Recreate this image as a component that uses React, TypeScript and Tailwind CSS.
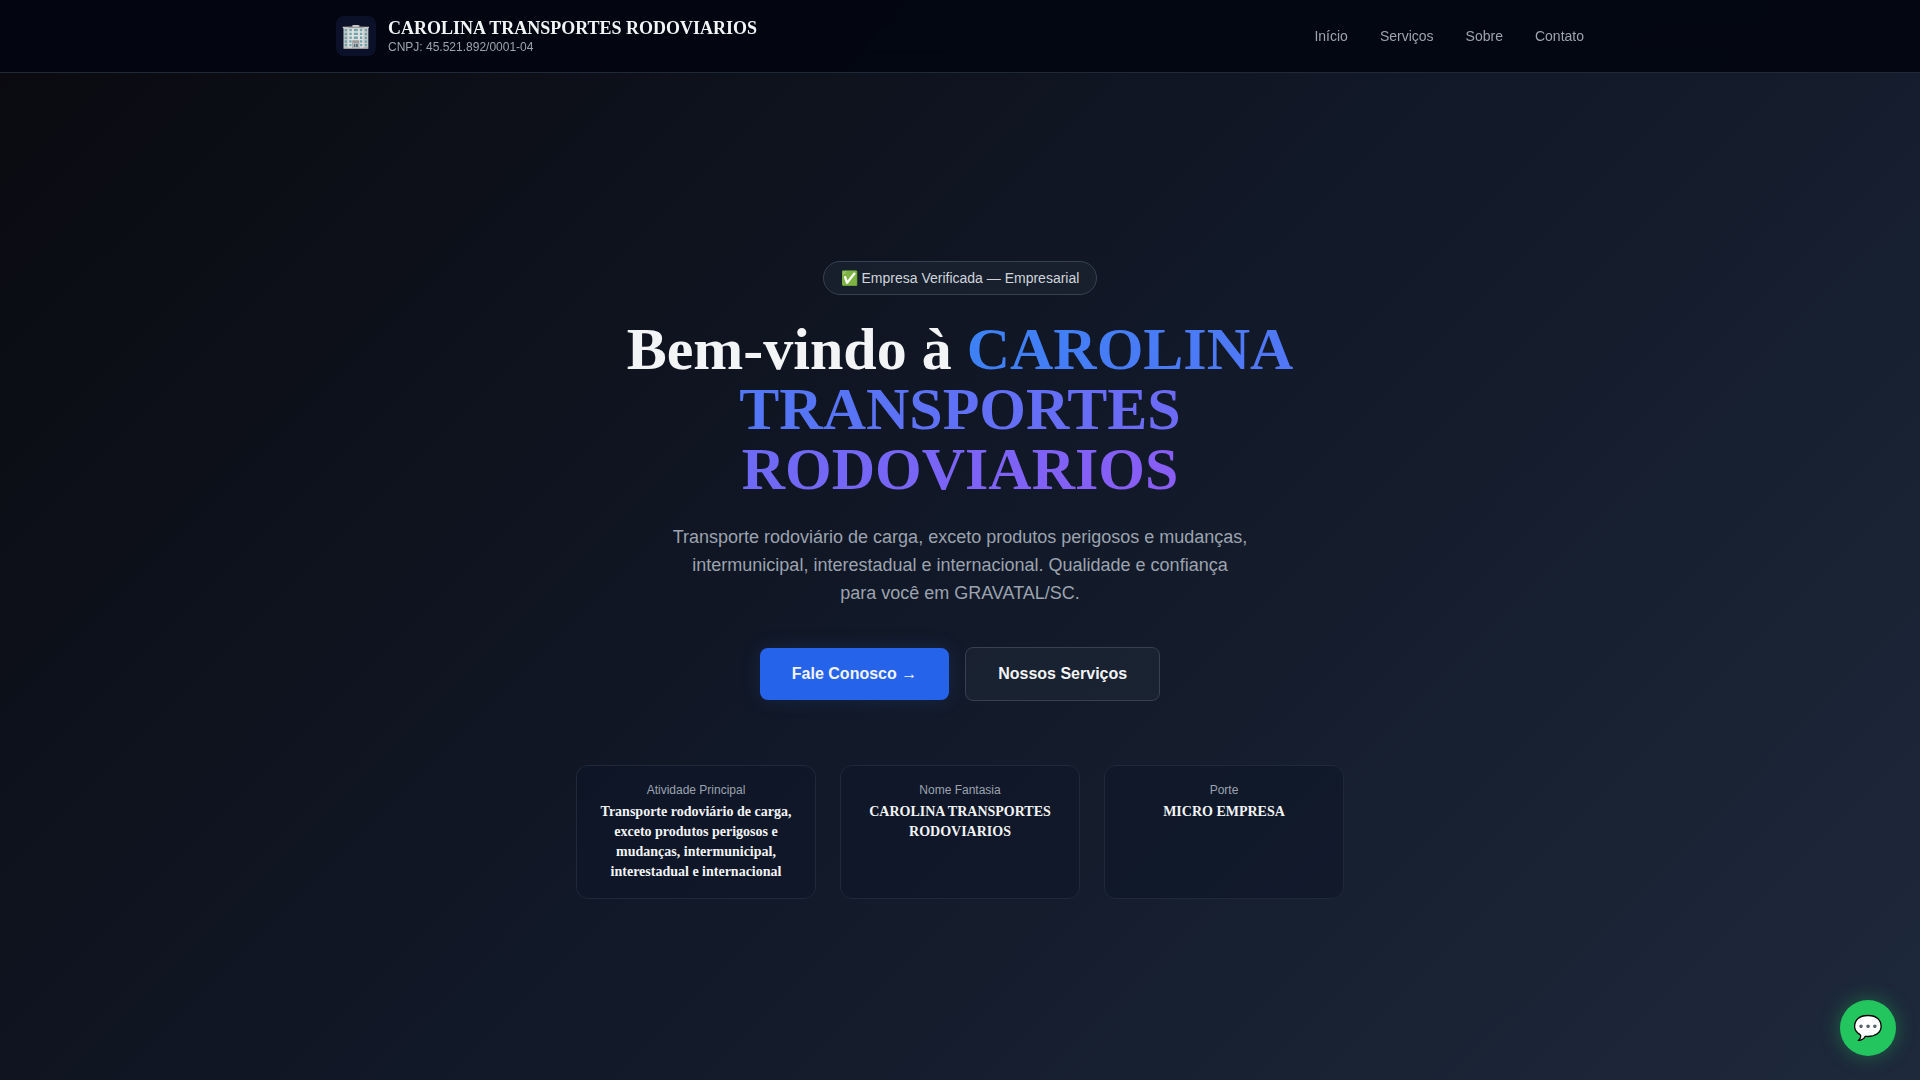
const links = [
  { label: "Início", href: "#inicio" },
  { label: "Serviços", href: "#servicos" },
  { label: "Sobre", href: "#sobre" },
  { label: "Contato", href: "#contato" },
];

const facts = [
  {
    label: "Atividade Principal",
    value:
      "Transporte rodoviário de carga, exceto produtos perigosos e mudanças, intermunicipal, interestadual e internacional",
  },
  { label: "Nome Fantasia", value: "CAROLINA TRANSPORTES RODOVIARIOS" },
  { label: "Porte", value: "MICRO EMPRESA" },
];

function Header() {
  return (
    <header className="fixed inset-x-0 top-0 z-10 border-b border-[#1f2937] bg-[#030611]/95 backdrop-blur-md">
      <div className="mx-auto flex max-w-7xl items-center justify-between px-4 py-4">
        <a href="#inicio" className="flex items-center gap-3">
          <span className="flex size-10 items-center justify-center rounded-lg bg-[#0a1128] text-2xl">🏢</span>
          <span className="flex flex-col">
            <span className="font-['Liberation_Serif',serif] text-lg leading-[22px] font-bold text-[#f3f4f6]">
              CAROLINA TRANSPORTES RODOVIARIOS
            </span>
            <span className="text-xs text-[#9ca3af]">CNPJ: 45.521.892/0001-04</span>
          </span>
        </a>
        <nav className="flex gap-8 text-sm text-[#9ca3af]">
          {links.map((l) => (
            <a key={l.href} href={l.href}>
              {l.label}
            </a>
          ))}
        </nav>
      </div>
    </header>
  );
}

function Hero() {
  return (
    <main
      id="inicio"
      className="flex min-h-screen flex-col items-center justify-center bg-[linear-gradient(135deg,#0a0a0f_0%,#111827_50%,#1e293b_100%)] px-4 pt-20 text-center"
    >
      <p className="mb-6 rounded-full border border-[#374151] bg-[#1f2937]/50 px-[17px] py-1.5 text-sm text-[#d1d5db]">
        ✅ Empresa Verificada — Empresarial
      </p>
      <h1 className="mb-6 max-w-3xl font-['Liberation_Serif',serif] text-6xl leading-[60px] font-bold text-[#f3f4f6]">
        Bem-vindo à{" "}
        <span className="bg-[linear-gradient(135deg,#3b82f6,#8b5cf6)] bg-clip-text text-transparent">
          CAROLINA TRANSPORTES RODOVIARIOS
        </span>
      </h1>
      <p className="mb-10 max-w-xl text-lg leading-7 text-[#9ca3af]">
        Transporte rodoviário de carga, exceto produtos perigosos e mudanças, intermunicipal, interestadual e
        internacional. Qualidade e confiança para você em GRAVATAL/SC.
      </p>
      <div className="flex flex-wrap items-center justify-center gap-4">
        <a
          href="#contato"
          className="rounded-lg bg-[#2563eb] px-8 py-3.5 font-semibold text-[#f3f4f6] shadow-[0_0_20px_rgba(59,130,246,0.15)]"
        >
          Fale Conosco →
        </a>
        <a
          href="#servicos"
          className="rounded-lg border border-[#374151] bg-[#1f2937]/50 px-8 py-3.5 font-semibold text-[#f3f4f6]"
        >
          Nossos Serviços
        </a>
      </div>
      <dl className="mt-16 grid w-full max-w-3xl grid-cols-1 gap-6 sm:grid-cols-3">
        {facts.map((f) => (
          <div key={f.label} className="rounded-xl border border-[#1f2937] bg-[#0e1528]/60 p-4">
            <dt className="mb-1 text-xs text-[#9ca3af]">{f.label}</dt>
            <dd className="font-['Liberation_Serif',serif] text-sm font-bold text-[#f3f4f6]">{f.value}</dd>
          </div>
        ))}
      </dl>
    </main>
  );
}

export default function App() {
  return (
    <div className="font-['Liberation_Sans',sans-serif]">
      <Header />
      <Hero />
      <button
        type="button"
        aria-label="Abrir conversa"
        className="fixed right-6 bottom-6 flex size-14 items-center justify-center rounded-full bg-[#22c55e] text-2xl shadow-[0_0_20px_rgba(34,197,94,0.4)]"
      >
        💬
      </button>
    </div>
  );
}
